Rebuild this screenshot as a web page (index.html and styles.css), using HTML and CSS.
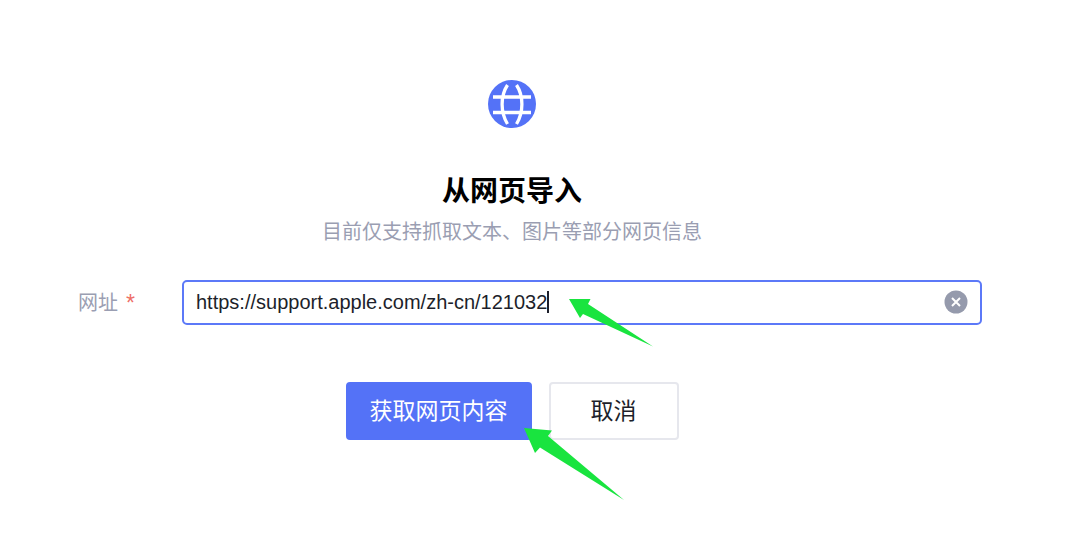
FILE: index.html
```html
<!DOCTYPE html>
<html lang="zh-CN">
<head>
<meta charset="utf-8">
<meta name="viewport" content="width=device-width, initial-scale=1">
<title>从网页导入</title>
<link rel="stylesheet" href="styles.css">
</head>
<body>
<main class="import">
  <svg class="globe" viewBox="0 0 48 48" aria-hidden="true">
    <circle cx="24" cy="24" r="24" fill="#5472f7"/>
    <g fill="none" stroke="#fff" stroke-width="3.300">
      <path d="M5 17H43M5 32.500H43M19.500 5C12.300 16 12.300 32 19.500 44M28.500 5C35.700 16 35.700 32 28.500 44"/>
    </g>
  </svg>
  <h1 class="title">从网页导入</h1>
  <p class="hint">目前仅支持抓取文本、图片等部分网页信息</p>
  <form class="form">
    <div class="row">
      <label class="label" for="url">网址 <span class="required">*</span></label>
      <div class="field">
        <input class="input" id="url" type="text" value="https://support.apple.com/zh-cn/121032">
        <span class="caret"></span>
        <button class="clear" type="button" aria-label="清除">
          <svg class="clear-icon" viewBox="0 0 24 24" aria-hidden="true">
            <circle cx="12" cy="12" r="11.500" fill="#959aac"/>
            <path d="M8 8L16 16M16 8L8 16" stroke="#fff" stroke-width="2"/>
          </svg>
        </button>
        <svg class="arrow arrow-field" viewBox="0 0 84 48" aria-hidden="true">
          <path d="M0 0L21.500 0L19 5L84 47.500L14 15L11 19Z" fill="#19e43f"/>
        </svg>
      </div>
    </div>
    <div class="actions">
      <button class="button primary" type="submit">获取网页内容</button>
      <button class="button" type="button">取消</button>
      <svg class="arrow arrow-submit" viewBox="0 0 100 72" aria-hidden="true">
        <path d="M0 0L28 2.500L24 8L100 72L16 19.500L11 25Z" fill="#19e43f"/>
      </svg>
    </div>
  </form>
</main>
</body>
</html>
```

FILE: styles.css
```css
* {
  box-sizing: border-box;
}

body {
  margin: 0;
  background: #fff;
  color: #1d1f2b;
  font-family: "Liberation Sans", "Noto Sans CJK SC", sans-serif;
}

.import {
  display: flex;
  flex-direction: column;
  align-items: center;
  min-height: 100vh;
  padding: 80px 98px 40px 42px;
}

.globe {
  width: 48px;
  height: 48px;
}

.title {
  margin: 44px 0 0;
  color: #000;
  font-size: 28px;
  font-weight: 700;
  line-height: 40px;
}

.hint {
  margin: 5px 0 0;
  color: #9a9eb2;
  font-size: 20px;
  line-height: 30px;
}

.form {
  width: 100%;
  margin-top: 33px;
}

.row {
  display: flex;
  align-items: center;
}

.label {
  display: flex;
  gap: 8px;
  width: 140px;
  padding-left: 36px;
  color: #9a9eb2;
  font-size: 20px;
  line-height: 30px;
}

.required {
  color: #ee6f68;
  font-size: 23px;
}

.field {
  position: relative;
  flex: 1;
}

.input {
  display: block;
  width: 100%;
  height: 45px;
  padding: 0 48px 0 12px;
  border: 2px solid #5c79f8;
  border-radius: 5px;
  outline: none;
  background: #fff;
  color: #1d1f2b;
  font: inherit;
  font-size: 20px;
}

.caret {
  position: absolute;
  top: 11px;
  left: 365px;
  width: 2px;
  height: 22px;
  background: #1d1f2b;
}

.clear {
  position: absolute;
  top: 10px;
  right: 14px;
  width: 24px;
  height: 24px;
  padding: 0;
  border: 0;
  background: none;
}

.clear-icon {
  display: block;
}

.arrow {
  position: absolute;
  pointer-events: none;
}

.arrow-field {
  top: 19px;
  left: 387px;
  width: 84px;
  height: 48px;
}

.actions {
  position: relative;
  display: flex;
  gap: 17px;
  width: max-content;
  margin: 57px auto 0;
}

.button {
  padding: 11px 40px;
  border: 2px solid #e6e7ed;
  border-radius: 4px;
  background: #fff;
  color: #1d1f2b;
  font: inherit;
  font-size: 23px;
  line-height: 32px;
}

.primary {
  padding: 11px 22px;
  border-color: #5472f7;
  background: #5472f7;
  color: #fff;
}

.arrow-submit {
  top: 46px;
  left: 178px;
  width: 100px;
  height: 72px;
}
```
